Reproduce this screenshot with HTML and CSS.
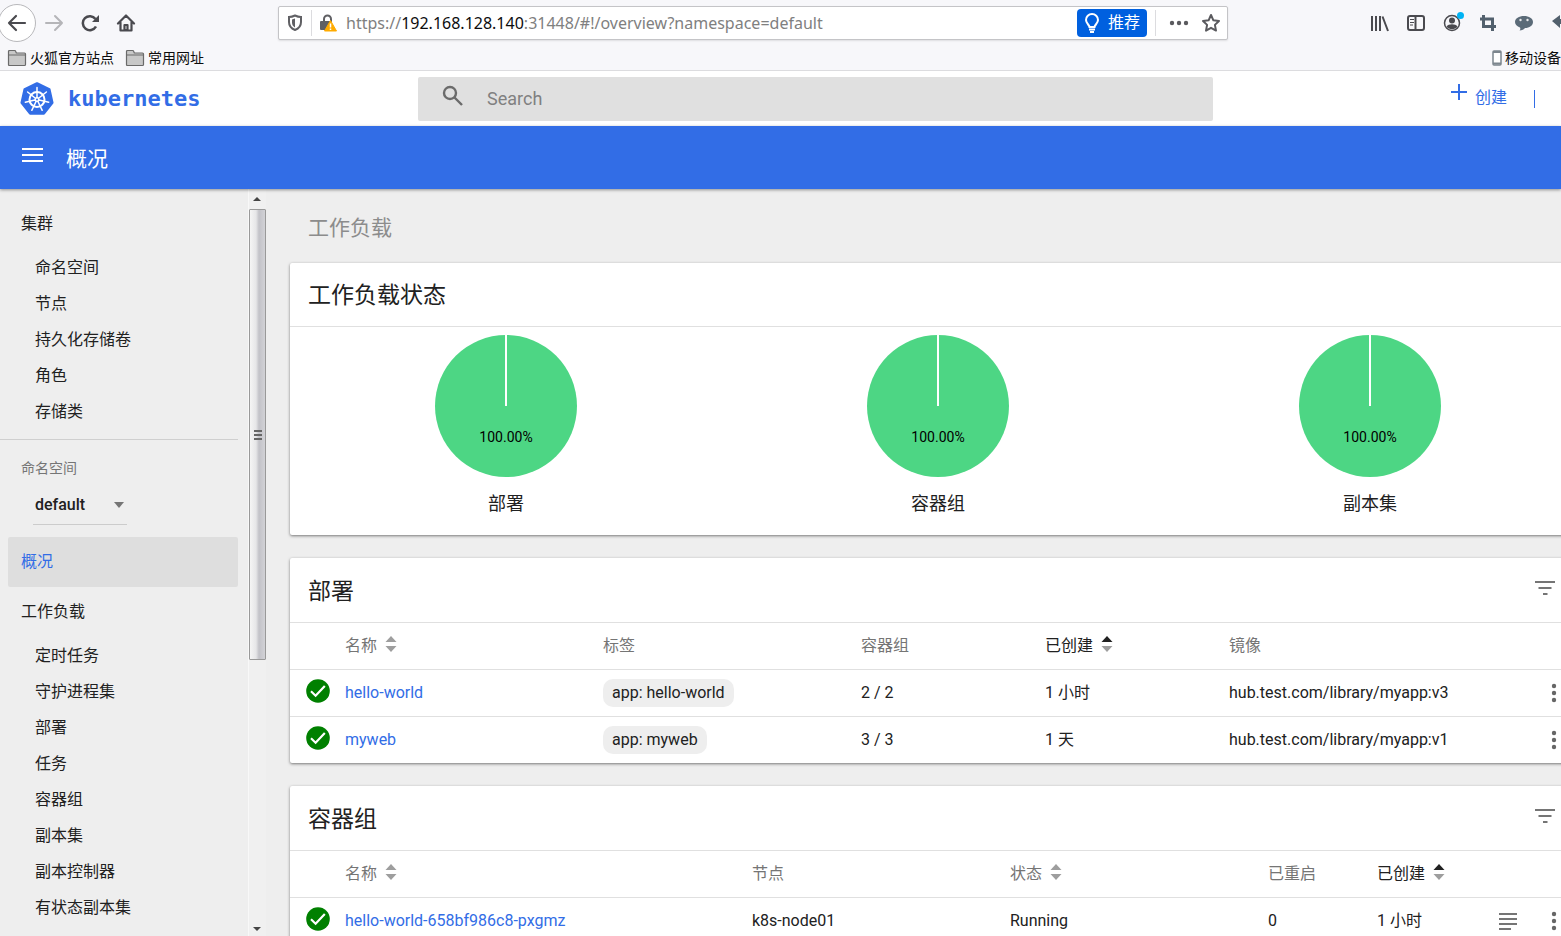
FILE: index.html
```html
<!DOCTYPE html>
<html lang="zh-CN">
<head>
    <meta charset="UTF-8">
    <meta name="viewport" content="width=device-width, initial-scale=1.0">
    <title>概况 - Kubernetes Dashboard</title>
    <link rel="stylesheet" href="styles.css">
</head>
<body>
    <svg class="symbols" aria-hidden="true">
        <symbol id="folder" viewBox="0 0 20 18">
            <path d="M1.500 15.500v-13q0-1 1-1h5q1 0 1.300 1l.5 1.500h8.200q1 0 1 1v10.500q0 1-1 1h-15q-1 0-1-1z" fill="#c8c8c8" stroke="#6a6a6a" stroke-width="1.200"/>
            <path d="M2 6h16" stroke="#6a6a6a"/>
        </symbol>
        <symbol id="sort" viewBox="0 0 12 16">
            <path class="sort-up" d="M6 0l5.500 6h-11z"/>
            <path class="sort-down" d="M6 16l5.500-6h-11z"/>
        </symbol>
        <symbol id="ok" viewBox="0 0 24 24">
            <circle cx="12" cy="12" r="11.800" fill="#008000"/>
            <path d="M5 12.300l4.600 4.400L18.800 7" fill="none" stroke="#fff" stroke-width="2.200"/>
        </symbol>
        <symbol id="filter" viewBox="0 0 20 14">
            <path d="M0 1h20M3.500 7h13M8 13h4.500" stroke="#757575" stroke-width="2"/>
        </symbol>
        <symbol id="more" viewBox="0 0 6 20">
            <g fill="#666"><circle cx="3" cy="3" r="2.200"/><circle cx="3" cy="10" r="2.200"/><circle cx="3" cy="17" r="2.200"/></g>
        </symbol>
    </svg>

    <div class="browser">
        <div class="nav-row">
            <div class="nav-buttons">
                <button class="back-btn" aria-label="后退">
                    <svg width="20" height="18" viewBox="0 0 20 18" fill="none" stroke="#4a4a4f" stroke-width="2.200" stroke-linecap="round" stroke-linejoin="round"><path d="M18 9H2M9 2L2 9l7 7"/></svg>
                </button>
                <button class="nav-btn" aria-label="前进">
                    <svg width="20" height="18" viewBox="0 0 20 18" fill="none" stroke="#b5b5b8" stroke-width="2" stroke-linecap="round" stroke-linejoin="round"><path d="M2 9h16M11 2l7 7-7 7"/></svg>
                </button>
                <button class="nav-btn" aria-label="刷新">
                    <svg width="20" height="18" viewBox="0 0 20 18" fill="none" stroke="#4a4a4f" stroke-width="2.500"><path d="M16 12.500A7 7 0 1 1 15.500 5"/><path d="M19 1v7h-7z" fill="#4a4a4f" stroke="none"/></svg>
                </button>
                <button class="nav-btn" aria-label="主页">
                    <svg width="20" height="18" viewBox="0 0 20 18" fill="none" stroke="#4a4a4f" stroke-width="2.200" stroke-linecap="round" stroke-linejoin="round"><path d="M2 9.500L10 1.500l8 8M4.500 8.500v8h11v-8"/><path d="M8.500 16v-5h3v5z"/></svg>
                </button>
            </div>
            <div class="url-bar">
                <svg width="16" height="18" viewBox="0 0 16 18"><path d="M8 1.500c2 1 4 1.500 6 1.500v5c0 4-2 6.500-6 8-4-1.500-6-4-6-8V3c2 0 4-.5 6-1.500z" fill="none" stroke="#606064" stroke-width="2"/><path d="M8 4.500v9c-2-1-3-3-3-5V5.500z" fill="#606064"/></svg>
                <span class="url-sep"></span>
                <svg width="18" height="18" viewBox="0 0 18 18"><path d="M5 8V5a3.500 3.500 0 0 1 7 0v3" fill="none" stroke="#606064" stroke-width="2"/><rect x="1" y="7" width="11" height="9" rx="1" fill="#606064"/><path d="M11.500 6.500l6 10.500h-12z" fill="#ffab00" stroke="#ffab00" stroke-linejoin="round"/><path d="M11.500 9.500v4M11.500 14.500v1.500" stroke="#fff" stroke-width="1.500"/></svg>
                <div class="url" role="textbox" aria-label="地址" contenteditable="true" spellcheck="false">https://<b>192.168.128.140</b>:31448/#!/overview?namespace=default</div>
                <button class="recommend">
                    <svg width="16" height="20" viewBox="0 0 16 20" fill="none" stroke="#fff" stroke-width="2"><path d="M5.500 14c0-2-3.500-3.500-3.500-7a6 6 0 0 1 12 0c0 3.500-3.500 5-3.500 7z"/><path d="M5 16.500h6M6 19h4"/></svg>
                    推荐
                </button>
                <span class="url-sep"></span>
                <button class="url-btn" aria-label="页面操作">
                    <svg width="20" height="6" viewBox="0 0 20 6" fill="#5a5a5e"><circle cx="3" cy="3" r="2.200"/><circle cx="10" cy="3" r="2.200"/><circle cx="17" cy="3" r="2.200"/></svg>
                </button>
                <button class="url-btn" aria-label="添加书签">
                    <svg width="20" height="20" viewBox="0 0 20 20"><path d="M10 2l2.400 5.300 5.600.7-4.100 3.900 1.100 5.700-5-2.800-5 2.800 1.100-5.700L2 8l5.600-.7z" fill="none" stroke="#5a5a5e" stroke-width="2" stroke-linejoin="round"/></svg>
                </button>
            </div>
            <div class="tool-buttons">
                <button class="nav-btn" aria-label="书库">
                    <svg width="20" height="18" viewBox="0 0 20 18" stroke="#4a4a4f" stroke-width="2"><path d="M2 2v15M6 2v15M10 2v15M12.500 2.500L18 17" fill="none"/></svg>
                </button>
                <button class="nav-btn" aria-label="侧栏">
                    <svg width="20" height="18" viewBox="0 0 20 18" fill="none" stroke="#4a4a4f" stroke-width="2"><rect x="2" y="2" width="16" height="14" rx="2"/><path d="M9.500 2v14"/><path d="M4 5.500h4M4 8.500h4M4 11h3" stroke-width="1"/></svg>
                </button>
                <button class="nav-btn" aria-label="账户">
                    <svg width="20" height="18" viewBox="0 0 20 18"><circle cx="10" cy="9" r="7.500" fill="none" stroke="#4a4a4f" stroke-width="1.500"/><circle cx="10" cy="6.500" r="3" fill="#4a4a4f"/><path d="M4.500 12.500c2-3 9-3 11 0-2.500 3.500-8.500 3.500-11 0z" fill="#4a4a4f"/></svg>
                    <span class="dot"></span>
                </button>
                <button class="nav-btn" aria-label="截图">
                    <svg width="20" height="18" viewBox="0 0 20 18" fill="none" stroke="#52606d" stroke-width="3"><path d="M5.500 1v11.500H18M2 5h12.500v12"/></svg>
                </button>
                <button class="nav-btn" aria-label="聊天">
                    <svg width="20" height="18" viewBox="0 0 20 18"><path d="M10 2c5 0 9 2.500 9 6s-3.500 6-8 6c-1 1.500-3 2.500-5.500 2.500 1-1 1-2 .5-3C3 12.500 1 10.500 1 8c0-3.500 4-6 9-6z" fill="#5b6b78"/><circle cx="6.500" cy="6" r="1.200" fill="#e8e8ea"/><circle cx="13.500" cy="6" r="1.200" fill="#e8e8ea"/></svg>
                </button>
                <button class="nav-btn" aria-label="撤销">
                    <svg width="20" height="18" viewBox="0 0 20 18"><path d="M2 7l8-6v4c5 0 8 3 8 9-2-3-4-4-8-4v4z" fill="#52606d"/></svg>
                </button>
            </div>
        </div>
        <div class="bookmarks">
            <a href="#"><svg width="20" height="18"><use href="#folder"/></svg>火狐官方站点</a>
            <a href="#"><svg width="20" height="18"><use href="#folder"/></svg>常用网址</a>
            <a href="#" class="mobile"><svg width="10" height="16" viewBox="0 0 10 16"><rect x="1" y="1" width="8" height="14" rx="1" fill="#fff" stroke="#7c868e" stroke-width="1.500"/><path d="M1 2h8M1 13.500h8" stroke="#7c868e" stroke-width="2"/></svg>移动设备</a>
        </div>
    </div>

    <header class="header">
        <a href="#" class="logo">
            <svg width="34" height="34" viewBox="0 0 34 34">
                <path d="M17 1.500L29.300 7.400 32.300 20.700 23.800 31.500H10.200L1.700 20.700 4.700 7.400z" fill="#326de6" stroke="#326de6" stroke-width="2.500" stroke-linejoin="round"/>
                <g fill="none" stroke="#fff">
                    <circle cx="17" cy="17.500" r="7.500" stroke-width="2"/>
                    <path stroke-width="1.500" stroke-linecap="round" d="M17 17.500V5.500M17 17.500l9.400-7.500M17 17.500l11.700 2.700M17 17.500l5.200 10.800M17 17.500l-5.200 10.800M17 17.500L5.300 20.200M17 17.500L7.600 10"/>
                </g>
                <circle cx="17" cy="17.500" r="2.500" fill="#fff"/>
                <circle cx="17" cy="17.500" r="1" fill="#326de6"/>
            </svg>
            kubernetes
        </a>
        <label class="search">
            <svg width="22" height="22" viewBox="0 0 22 22" fill="none" stroke="#6b6b6b" stroke-width="2.400"><circle cx="8" cy="8" r="6"/><path d="M12.500 12.500l7.500 7.500"/></svg>
            <input type="text" placeholder="Search" aria-label="Search">
        </label>
        <div class="header-actions">
            <button class="create">
                <svg width="16" height="16" viewBox="0 0 16 16" stroke="#326de6" stroke-width="2"><path d="M8 0v16M0 8h16"/></svg>
                <span>创建</span>
            </button>
            <span class="divider"></span>
        </div>
    </header>

    <div class="action-bar">
        <button class="menu-btn" aria-label="菜单">
            <svg width="21" height="14" viewBox="0 0 21 14" stroke="#fff" stroke-width="2"><path d="M0 1h21M0 7h21M0 13h21"/></svg>
        </button>
        <h1>概况</h1>
    </div>

    <div class="main">
        <nav class="sidebar">
            <a href="#" class="group">集群</a>
            <a href="#" class="item">命名空间</a>
            <a href="#" class="item">节点</a>
            <a href="#" class="item">持久化存储卷</a>
            <a href="#" class="item">角色</a>
            <a href="#" class="item">存储类</a>
            <div class="namespace">
                <label for="namespace">命名空间</label>
                <div class="select-wrap">
                    <select id="namespace"><option>default</option></select>
                    <svg width="10" height="6" viewBox="0 0 10 6"><path d="M0 0h10L5 6z" fill="#757575"/></svg>
                </div>
            </div>
            <a href="#" class="group active">概况</a>
            <a href="#" class="group">工作负载</a>
            <a href="#" class="item">定时任务</a>
            <a href="#" class="item">守护进程集</a>
            <a href="#" class="item">部署</a>
            <a href="#" class="item">任务</a>
            <a href="#" class="item">容器组</a>
            <a href="#" class="item">副本集</a>
            <a href="#" class="item">副本控制器</a>
            <a href="#" class="item">有状态副本集</a>
        </nav>
        <div class="scrollbar">
            <svg width="16" height="20" viewBox="0 0 16 20"><path d="M4 12l4-4 4 4z" fill="#444"/></svg>
            <div class="thumb"><i></i><i></i><i></i></div>
            <div class="track"></div>
            <svg width="16" height="14" viewBox="0 0 16 14"><path d="M4 5l4 4 4-4z" fill="#444"/></svg>
        </div>

        <main class="content">
            <h2 class="section-title">工作负载</h2>

            <section class="card">
                <div class="card-head short"><h3>工作负载状态</h3></div>
                <div class="charts">
                    <figure>
                        <svg width="142" height="142" viewBox="0 0 142 142"><circle cx="71" cy="71" r="71"/><path d="M71 0v71"/><text x="71" y="107">100.00%</text></svg>
                        <figcaption>部署</figcaption>
                    </figure>
                    <figure>
                        <svg width="142" height="142" viewBox="0 0 142 142"><circle cx="71" cy="71" r="71"/><path d="M71 0v71"/><text x="71" y="107">100.00%</text></svg>
                        <figcaption>容器组</figcaption>
                    </figure>
                    <figure>
                        <svg width="142" height="142" viewBox="0 0 142 142"><circle cx="71" cy="71" r="71"/><path d="M71 0v71"/><text x="71" y="107">100.00%</text></svg>
                        <figcaption>副本集</figcaption>
                    </figure>
                </div>
            </section>

            <section class="card">
                <div class="card-head">
                    <h3>部署</h3>
                    <button class="icon-btn" aria-label="筛选"><svg width="20" height="14"><use href="#filter"/></svg></button>
                </div>
                <table>
                    <colgroup>
                        <col class="c-status"><col class="c-mid"><col class="c-mid"><col class="c-small"><col class="c-small"><col><col class="c-menu">
                    </colgroup>
                    <thead>
                        <tr>
                            <th></th>
                            <th>名称<svg class="sort" width="12" height="16"><use href="#sort"/></svg></th>
                            <th>标签</th>
                            <th>容器组</th>
                            <th class="sorted">已创建<svg class="sort" width="12" height="16"><use href="#sort"/></svg></th>
                            <th>镜像</th>
                            <th></th>
                        </tr>
                    </thead>
                    <tbody>
                        <tr>
                            <td class="status"><svg width="24" height="24"><use href="#ok"/></svg></td>
                            <td><a href="#">hello-world</a></td>
                            <td><span class="chip">app: hello-world</span></td>
                            <td>2 / 2</td>
                            <td>1 小时</td>
                            <td>hub.test.com/library/myapp:v3</td>
                            <td><button class="icon-btn" aria-label="更多"><svg width="6" height="20"><use href="#more"/></svg></button></td>
                        </tr>
                        <tr>
                            <td class="status"><svg width="24" height="24"><use href="#ok"/></svg></td>
                            <td><a href="#">myweb</a></td>
                            <td><span class="chip">app: myweb</span></td>
                            <td>3 / 3</td>
                            <td>1 天</td>
                            <td>hub.test.com/library/myapp:v1</td>
                            <td><button class="icon-btn" aria-label="更多"><svg width="6" height="20"><use href="#more"/></svg></button></td>
                        </tr>
                    </tbody>
                </table>
            </section>

            <section class="card">
                <div class="card-head">
                    <h3>容器组</h3>
                    <button class="icon-btn" aria-label="筛选"><svg width="20" height="14"><use href="#filter"/></svg></button>
                </div>
                <table>
                    <colgroup>
                        <col class="c-status"><col><col class="c-mid"><col class="c-mid"><col class="c-count"><col class="c-age"><col class="c-logs"><col class="c-menu">
                    </colgroup>
                    <thead>
                        <tr>
                            <th></th>
                            <th>名称<svg class="sort" width="12" height="16"><use href="#sort"/></svg></th>
                            <th>节点</th>
                            <th>状态<svg class="sort" width="12" height="16"><use href="#sort"/></svg></th>
                            <th>已重启</th>
                            <th class="sorted">已创建<svg class="sort" width="12" height="16"><use href="#sort"/></svg></th>
                            <th></th>
                            <th></th>
                        </tr>
                    </thead>
                    <tbody>
                        <tr>
                            <td class="status"><svg width="24" height="24"><use href="#ok"/></svg></td>
                            <td><a href="#">hello-world-658bf986c8-pxgmz</a></td>
                            <td>k8s-node01</td>
                            <td>Running</td>
                            <td>0</td>
                            <td>1 小时</td>
                            <td><button class="icon-btn" aria-label="日志"><svg width="18" height="18" viewBox="0 0 18 18" stroke="#757575" stroke-width="2"><path d="M0 2h18M0 7h18M0 12h18M0 17h12"/></svg></button></td>
                            <td><button class="icon-btn" aria-label="更多"><svg width="6" height="20"><use href="#more"/></svg></button></td>
                        </tr>
                    </tbody>
                </table>
            </section>
        </main>
    </div>
</body>
</html>
```
FILE: styles.css
```css
* {
    box-sizing: border-box;
}

body {
    margin: 0;
    height: 100vh;
    display: flex;
    flex-direction: column;
    overflow: hidden;
    background-color: #eeeeee;
    color: #212121;
    font-family: Roboto, "Noto Sans CJK SC", sans-serif;
    font-size: 16px;
    line-height: 24px;
}

button {
    display: flex;
    align-items: center;
    justify-content: center;
    flex: none;
    padding: 0;
    border: none;
    background: none;
    font: inherit;
    cursor: pointer;
}

a {
    color: inherit;
    text-decoration: none;
}

svg {
    flex: none;
}

h1, h2, h3 {
    margin: 0;
    font-weight: 400;
}

.symbols {
    position: absolute;
    width: 0;
    height: 0;
}

/* Browser toolbar */
.browser {
    flex: none;
    background-color: #f7f7fa;
    border-bottom: 1px solid #dcdcdf;
}

.nav-row {
    display: flex;
    align-items: center;
    height: 45px;
}

.nav-buttons {
    display: flex;
    align-items: center;
    width: 278px;
    flex: none;
}

.back-btn {
    width: 38px;
    height: 38px;
    margin-left: -2px;
    background-color: #fff;
    border: 1px solid #b8b8bb;
    border-radius: 50%;
}

.nav-btn {
    position: relative;
    width: 36px;
    height: 36px;
}

.url-bar {
    flex: 1;
    min-width: 0;
    display: flex;
    align-items: center;
    height: 34px;
    padding-left: 8px;
    background-color: #fff;
    border: 1px solid #c4c4c7;
    border-radius: 2px;
    box-shadow: 0 1px 2px rgba(0, 0, 0, 0.1);
}

.url-sep {
    width: 1px;
    height: 26px;
    margin: 0 7px 0 8px;
    background-color: #dcdcdf;
}

.url {
    flex: 1;
    min-width: 0;
    margin-left: 9px;
    overflow: hidden;
    white-space: nowrap;
    outline: none;
    color: #808080;
    font-family: "Noto Sans", sans-serif;
    font-size: 16px;
}

.url b {
    font-weight: 400;
    color: #0c0c0d;
}

.recommend {
    gap: 8px;
    width: 70px;
    height: 28px;
    border-radius: 4px;
    background-color: #0060df;
    color: #fff;
}

.url-btn {
    width: 32px;
    height: 32px;
}

.tool-buttons {
    display: flex;
    width: 333px;
    flex: none;
    padding-left: 134px;
    overflow: hidden;
}

.dot {
    position: absolute;
    top: 7px;
    right: 6px;
    width: 7px;
    height: 7px;
    border-radius: 50%;
    background-color: #00b3f4;
}

.bookmarks {
    display: flex;
    gap: 11px;
    height: 25px;
    padding-left: 7px;
    color: #0c0c0d;
    font-size: 14px;
}

.bookmarks a {
    display: flex;
    align-items: center;
    gap: 3px;
    white-space: nowrap;
}

.bookmarks .mobile {
    margin-left: auto;
}

/* Dashboard header */
.header {
    flex: none;
    display: flex;
    align-items: center;
    height: 55px;
    background-color: #fff;
}

.logo {
    display: flex;
    align-items: center;
    gap: 14px;
    width: 418px;
    flex: none;
    padding-left: 20px;
    color: #326de6;
    font-family: "DejaVu Sans Mono", monospace;
    font-size: 22px;
    font-weight: bold;
}

.search {
    flex: 1;
    min-width: 0;
    display: flex;
    align-items: center;
    gap: 23px;
    height: 44px;
    padding: 0 24px;
    background-color: #e0e0e0;
    border-radius: 2px;
}

.search svg {
    margin-bottom: 6px;
}

.search input {
    flex: 1;
    min-width: 0;
    padding: 0;
    border: none;
    outline: none;
    background: none;
    font: inherit;
    font-size: 18px;
}

.search input::placeholder {
    color: #808080;
}

.header-actions {
    display: flex;
    align-items: center;
    justify-content: flex-end;
    gap: 27px;
    width: 348px;
    flex: none;
    padding-right: 26px;
}

.create {
    align-items: flex-start;
    gap: 8px;
    height: 30px;
    color: #326de6;
}

.create span {
    padding-top: 2px;
}

.divider {
    width: 1px;
    height: 18px;
    background-color: #326de6;
}

.action-bar {
    position: relative;
    flex: none;
    display: flex;
    align-items: center;
    gap: 23px;
    height: 63px;
    padding-left: 22px;
    background-color: #326de6;
    color: #fff;
    box-shadow: 0 1px 3px rgba(0, 0, 0, 0.4);
}

.menu-btn {
    padding-bottom: 5px;
}

.action-bar h1 {
    padding-top: 2px;
    font-size: 21px;
}

.main {
    flex: 1;
    min-height: 0;
    display: flex;
}

/* Sidebar */
.sidebar {
    width: 248px;
    flex: none;
    padding-top: 10px;
    overflow: hidden;
}

.sidebar a {
    display: block;
}

.group {
    margin: 0 10px 0 8px;
    padding-left: 13px;
    line-height: 50px;
}

.group.active {
    background-color: #dedede;
    border-radius: 2px;
    color: #326de6;
}

.group + .item {
    margin-top: 1px;
}

.item {
    padding-left: 35px;
    line-height: 36px;
}

.namespace {
    margin: 9px 10px 12px 0;
    padding: 16px 0 0 21px;
    border-top: 1px solid #cfcfcf;
    color: #757575;
    font-size: 14px;
}

.namespace label {
    display: block;
}

.select-wrap {
    display: flex;
    align-items: center;
    width: 94px;
    height: 40px;
    margin: 5px 0 0 12px;
    padding: 0 3px 0 2px;
    border-bottom: 1px solid #cccccc;
}

.select-wrap select {
    flex: 1;
    min-width: 0;
    padding: 0;
    border: none;
    outline: none;
    background: none;
    appearance: none;
    color: #212121;
    font: inherit;
    font-size: 16px;
    font-weight: 500;
}

.scrollbar {
    display: flex;
    flex-direction: column;
    width: 18px;
    flex: none;
    border-left: 1px solid #f8f8f8;
    background-color: #f0f0f0;
}

.thumb {
    flex: 12;
    display: flex;
    flex-direction: column;
    align-items: center;
    justify-content: center;
    gap: 2px;
    border: 1px solid #999;
    border-radius: 1px;
    background: linear-gradient(to right, #f5f5f5, #e6e6e8 40%, #c2c2c8 60%, #d2d2d6);
}

.thumb i {
    width: 8px;
    height: 2px;
    background-color: #666;
}

.track {
    flex: 7;
}

/* Content */
.content {
    flex: 1;
    min-width: 0;
    margin-right: -25px;
    padding-left: 24px;
}

.section-title {
    padding: 27px 0 23px 18px;
    color: #8c8c8c;
    font-size: 21px;
}

.card {
    margin-bottom: 23px;
    background-color: #fff;
    border-radius: 2px;
    box-shadow: 0 1px 3px rgba(0, 0, 0, 0.5);
}

.card-head {
    display: flex;
    align-items: center;
    justify-content: space-between;
    height: 65px;
    padding: 0 31px 0 18px;
    border-bottom: 1px solid #e0e0e0;
}

.card-head.short {
    height: 64px;
}

.card-head h3 {
    padding-top: 3px;
    font-size: 23px;
}

.card-head .icon-btn {
    padding-bottom: 4px;
}

.charts {
    display: flex;
    padding: 8px 0 19px;
}

.charts figure {
    flex: 1;
    display: flex;
    flex-direction: column;
    align-items: center;
    gap: 15px;
    margin: 0;
    font-size: 18px;
}

.charts circle {
    fill: #4dd684;
}

.charts path {
    stroke: #fff;
    stroke-width: 2;
}

.charts text {
    font-size: 14px;
    text-anchor: middle;
}

table {
    width: 100%;
    table-layout: fixed;
    border-collapse: collapse;
}

.c-status { width: 55px; }
.c-mid { width: 258px; }
.c-small { width: 184px; }
.c-count { width: 109px; }
.c-age { width: 122px; }
.c-logs { width: 52px; }
.c-menu { width: 35px; }

th, td {
    height: 46px;
    padding: 0;
    text-align: left;
    white-space: nowrap;
}

td {
    height: 47px;
    border-top: 1px solid #e0e0e0;
}

th {
    color: #757575;
    font-weight: 400;
}

th.sorted {
    color: #212121;
}

.sort {
    margin-left: 8px;
    vertical-align: -1px;
    color: #9e9e9e;
}

.sort-up {
    fill: currentColor;
}

.sort-down {
    fill: #9e9e9e;
}

.sorted .sort {
    color: #212121;
}

td a {
    color: #326de6;
}

.status svg {
    display: block;
    margin: 0 0 4px 16px;
}

.chip {
    display: inline-block;
    padding: 2px 9px;
    border-radius: 10px;
    background-color: #eeeeee;
}
```
